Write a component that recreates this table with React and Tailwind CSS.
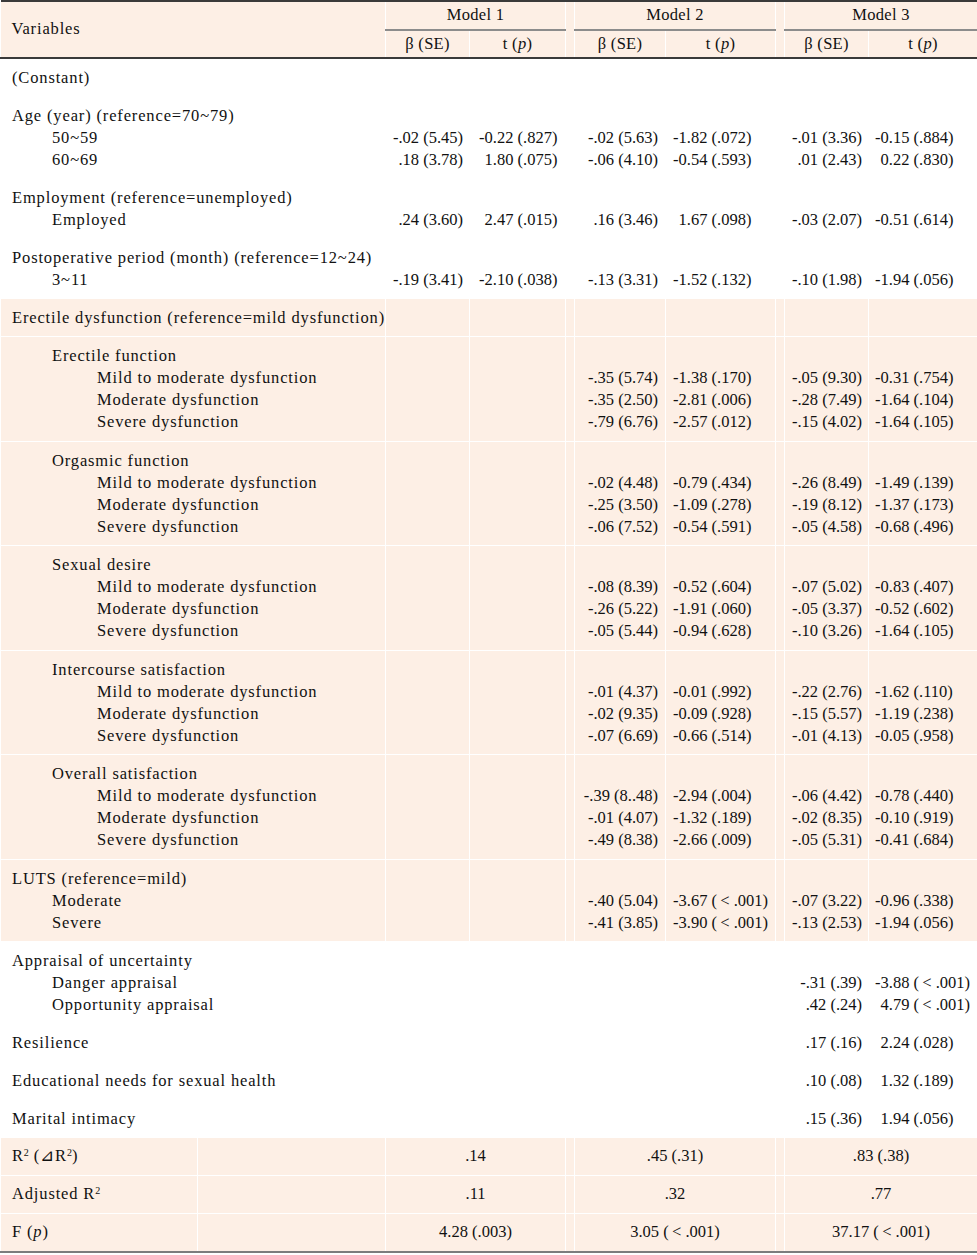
const peach = 'bg-[#fdefe5]';
const labelText = 'text-[16.5px] tracking-[0.85px]';

// [label, indent, m1 β, m1 t, m2 β, m2 t, m3 β, m3 t]
const groups = [
  { lines: [['(Constant)', 0]] },
  {
    lines: [
      ['Age (year) (reference=70~79)', 0],
      ['50~59', 1, '-.02 (5.45)', '-0.22 (.827)', '-.02 (5.63)', '-1.82 (.072)', '-.01 (3.36)', '-0.15 (.884)'],
      ['60~69', 1, '.18 (3.78)', '1.80 (.075)', '-.06 (4.10)', '-0.54 (.593)', '.01 (2.43)', '0.22 (.830)'],
    ],
  },
  {
    lines: [
      ['Employment (reference=unemployed)', 0],
      ['Employed', 1, '.24 (3.60)', '2.47 (.015)', '.16 (3.46)', '1.67 (.098)', '-.03 (2.07)', '-0.51 (.614)'],
    ],
  },
  {
    lines: [
      ['Postoperative period (month) (reference=12~24)', 0],
      ['3~11', 1, '-.19 (3.41)', '-2.10 (.038)', '-.13 (3.31)', '-1.52 (.132)', '-.10 (1.98)', '-1.94 (.056)'],
    ],
  },
  { shade: true, lines: [['Erectile dysfunction (reference=mild dysfunction)', 0]] },
  {
    shade: true,
    tall: true,
    lines: [
      ['Erectile function', 1],
      ['Mild to moderate dysfunction', 2, '', '', '-.35 (5.74)', '-1.38 (.170)', '-.05 (9.30)', '-0.31 (.754)'],
      ['Moderate dysfunction', 2, '', '', '-.35 (2.50)', '-2.81 (.006)', '-.28 (7.49)', '-1.64 (.104)'],
      ['Severe dysfunction', 2, '', '', '-.79 (6.76)', '-2.57 (.012)', '-.15 (4.02)', '-1.64 (.105)'],
    ],
  },
  {
    shade: true,
    tall: true,
    lines: [
      ['Orgasmic function', 1],
      ['Mild to moderate dysfunction', 2, '', '', '-.02 (4.48)', '-0.79 (.434)', '-.26 (8.49)', '-1.49 (.139)'],
      ['Moderate dysfunction', 2, '', '', '-.25 (3.50)', '-1.09 (.278)', '-.19 (8.12)', '-1.37 (.173)'],
      ['Severe dysfunction', 2, '', '', '-.06 (7.52)', '-0.54 (.591)', '-.05 (4.58)', '-0.68 (.496)'],
    ],
  },
  {
    shade: true,
    tall: true,
    lines: [
      ['Sexual desire', 1],
      ['Mild to moderate dysfunction', 2, '', '', '-.08 (8.39)', '-0.52 (.604)', '-.07 (5.02)', '-0.83 (.407)'],
      ['Moderate dysfunction', 2, '', '', '-.26 (5.22)', '-1.91 (.060)', '-.05 (3.37)', '-0.52 (.602)'],
      ['Severe dysfunction', 2, '', '', '-.05 (5.44)', '-0.94 (.628)', '-.10 (3.26)', '-1.64 (.105)'],
    ],
  },
  {
    shade: true,
    tall: true,
    lines: [
      ['Intercourse satisfaction', 1],
      ['Mild to moderate dysfunction', 2, '', '', '-.01 (4.37)', '-0.01 (.992)', '-.22 (2.76)', '-1.62 (.110)'],
      ['Moderate dysfunction', 2, '', '', '-.02 (9.35)', '-0.09 (.928)', '-.15 (5.57)', '-1.19 (.238)'],
      ['Severe dysfunction', 2, '', '', '-.07 (6.69)', '-0.66 (.514)', '-.01 (4.13)', '-0.05 (.958)'],
    ],
  },
  {
    shade: true,
    tall: true,
    lines: [
      ['Overall satisfaction', 1],
      ['Mild to moderate dysfunction', 2, '', '', '-.39 (8..48)', '-2.94 (.004)', '-.06 (4.42)', '-0.78 (.440)'],
      ['Moderate dysfunction', 2, '', '', '-.01 (4.07)', '-1.32 (.189)', '-.02 (8.35)', '-0.10 (.919)'],
      ['Severe dysfunction', 2, '', '', '-.49 (8.38)', '-2.66 (.009)', '-.05 (5.31)', '-0.41 (.684)'],
    ],
  },
  {
    shade: true,
    tall: true,
    lines: [
      ['LUTS (reference=mild)', 0],
      ['Moderate', 1, '', '', '-.40 (5.04)', '-3.67 (\u2009< .001)', '-.07 (3.22)', '-0.96 (.338)'],
      ['Severe', 1, '', '', '-.41 (3.85)', '-3.90 (\u2009< .001)', '-.13 (2.53)', '-1.94 (.056)'],
    ],
  },
  {
    lines: [
      ['Appraisal of uncertainty', 0],
      ['Danger appraisal', 1, '', '', '', '', '-.31 (.39)', '-3.88 (\u2009< .001)'],
      ['Opportunity appraisal', 1, '', '', '', '', '.42 (.24)', '4.79 (\u2009< .001)'],
    ],
  },
  { lines: [['Resilience', 0, '', '', '', '', '.17 (.16)', '2.24 (.028)']] },
  { lines: [['Educational needs for sexual health', 0, '', '', '', '', '.10 (.08)', '1.32 (.189)']] },
  { lines: [['Marital intimacy', 0, '', '', '', '', '.15 (.36)', '1.94 (.056)']] },
];

const indents = ['pl-0', 'pl-[40px]', 'pl-[85px]'];
const numCls = [
  'text-right pr-[6px]',
  'text-left pl-[9px]',
  'text-right pr-[7px]',
  'text-left pl-[7px]',
  'text-right pr-[6px]',
  'text-left pl-[6px]',
];

const cellBase = 'border border-white align-top pt-2';

function NumCell({ lines, k, pad }) {
  const isT = k % 2 === 1;
  return (
    <td className={`${cellBase} ${pad} ${numCls[k]} whitespace-nowrap text-[16.5px]`}>
      {lines.map((l, i) => {
        const v = l[2 + k] || '';
        return (
          <div key={i} className="h-[22px] leading-[22px]">
            {isT && v && !v.startsWith('-') && <span className="invisible">-</span>}
            {v}
          </div>
        );
      })}
    </td>
  );
}

function Spacer() {
  return <td className="border border-white" />;
}

function GroupRow({ group }) {
  const { lines, shade, tall } = group;
  const pad = tall ? 'pb-[7.5px]' : 'pb-[7px]';
  return (
    <tr className={shade ? peach : 'bg-white'}>
      <td colSpan={2} className={`${cellBase} ${pad} pl-[11px] ${labelText} whitespace-nowrap`}>
        {lines.map((l, i) => (
          <div key={i} className={`h-[22px] leading-[22px] ${indents[l[1]]}`}>
            {l[0]}
          </div>
        ))}
      </td>
      <NumCell lines={lines} k={0} pad={pad} />
      <NumCell lines={lines} k={1} pad={pad} />
      <Spacer />
      <NumCell lines={lines} k={2} pad={pad} />
      <NumCell lines={lines} k={3} pad={pad} />
      <Spacer />
      <NumCell lines={lines} k={4} pad={pad} />
      <NumCell lines={lines} k={5} pad={pad} />
    </tr>
  );
}

function Sq() {
  return <sup className="text-[10px] tracking-normal">2</sup>;
}

const fitRows = [
  {
    label: (
      <>
        R<Sq /> ({'\u22BF'}R<Sq />)
      </>
    ),
    vals: ['.14', '.45 (.31)', '.83 (.38)'],
  },
  {
    label: (
      <>
        Adjusted R<Sq />
      </>
    ),
    vals: ['.11', '.32', '.77'],
  },
  {
    label: (
      <>
        F (<i>p</i>)
      </>
    ),
    vals: ['4.28 (.003)', '3.05 (\u2009< .001)', '37.17 (\u2009< .001)'],
  },
];

function FitRow({ row }) {
  const c = 'border border-white text-center text-[16.5px] whitespace-nowrap';
  return (
    <tr className={`${peach} h-[38px]`}>
      <td className={`border border-white pl-[11px] ${labelText} whitespace-nowrap`}>{row.label}</td>
      <td className="border border-white" />
      <td colSpan={2} className={c}>{row.vals[0]}</td>
      <Spacer />
      <td colSpan={2} className={c}>{row.vals[1]}</td>
      <Spacer />
      <td colSpan={2} className={c}>{row.vals[2]}</td>
    </tr>
  );
}

export default function App() {
  const th = 'font-normal text-[16.5px] tracking-[0.3px] text-center border-x border-white';
  const underline = 'border-b-2 border-b-[#8c8c8c]';
  return (
    <div className="w-[977px] min-h-[1255px] bg-white text-[#111] font-['Liberation_Serif','DejaVu_Serif',serif]">
      <table className="w-[977px] table-fixed border-collapse border-t-2 border-t-[#3a3a3a] border-b-2 border-b-[#7d7d7d]">
        <colgroup>
          <col className="w-[197px]" />
          <col className="w-[188px]" />
          <col className="w-[84px]" />
          <col className="w-[96px]" />
          <col className="w-[9px]" />
          <col className="w-[91px]" />
          <col className="w-[110px]" />
          <col className="w-[9px]" />
          <col className="w-[84px]" />
          <col className="w-[109px]" />
        </colgroup>
        <thead className={peach}>
          <tr className="h-[29px]">
            <th
              colSpan={2}
              rowSpan={2}
              className={`font-normal text-left pl-[11px] ${labelText} border-r border-white`}
            >
              Variables
            </th>
            <th colSpan={2} className={`${th} ${underline}`}>
              Model 1
            </th>
            <th rowSpan={2} className="border-x border-white" />
            <th colSpan={2} className={`${th} ${underline}`}>
              Model 2
            </th>
            <th rowSpan={2} className="border-x border-white" />
            <th colSpan={2} className={`${th} ${underline}`}>
              Model 3
            </th>
          </tr>
          <tr className="h-[28px] border-b-2 border-b-[#3a3a3a]">
            {[0, 1, 2].map((m) => [
              <th key={`b${m}`} className={th}>
                β (SE)
              </th>,
              <th key={`t${m}`} className={th}>
                t (<i>p</i>)
              </th>,
            ])}
          </tr>
        </thead>
        <tbody>
          {groups.map((g, i) => (
            <GroupRow key={i} group={g} />
          ))}
          {fitRows.map((r, i) => (
            <FitRow key={i} row={r} />
          ))}
        </tbody>
      </table>
    </div>
  );
}
